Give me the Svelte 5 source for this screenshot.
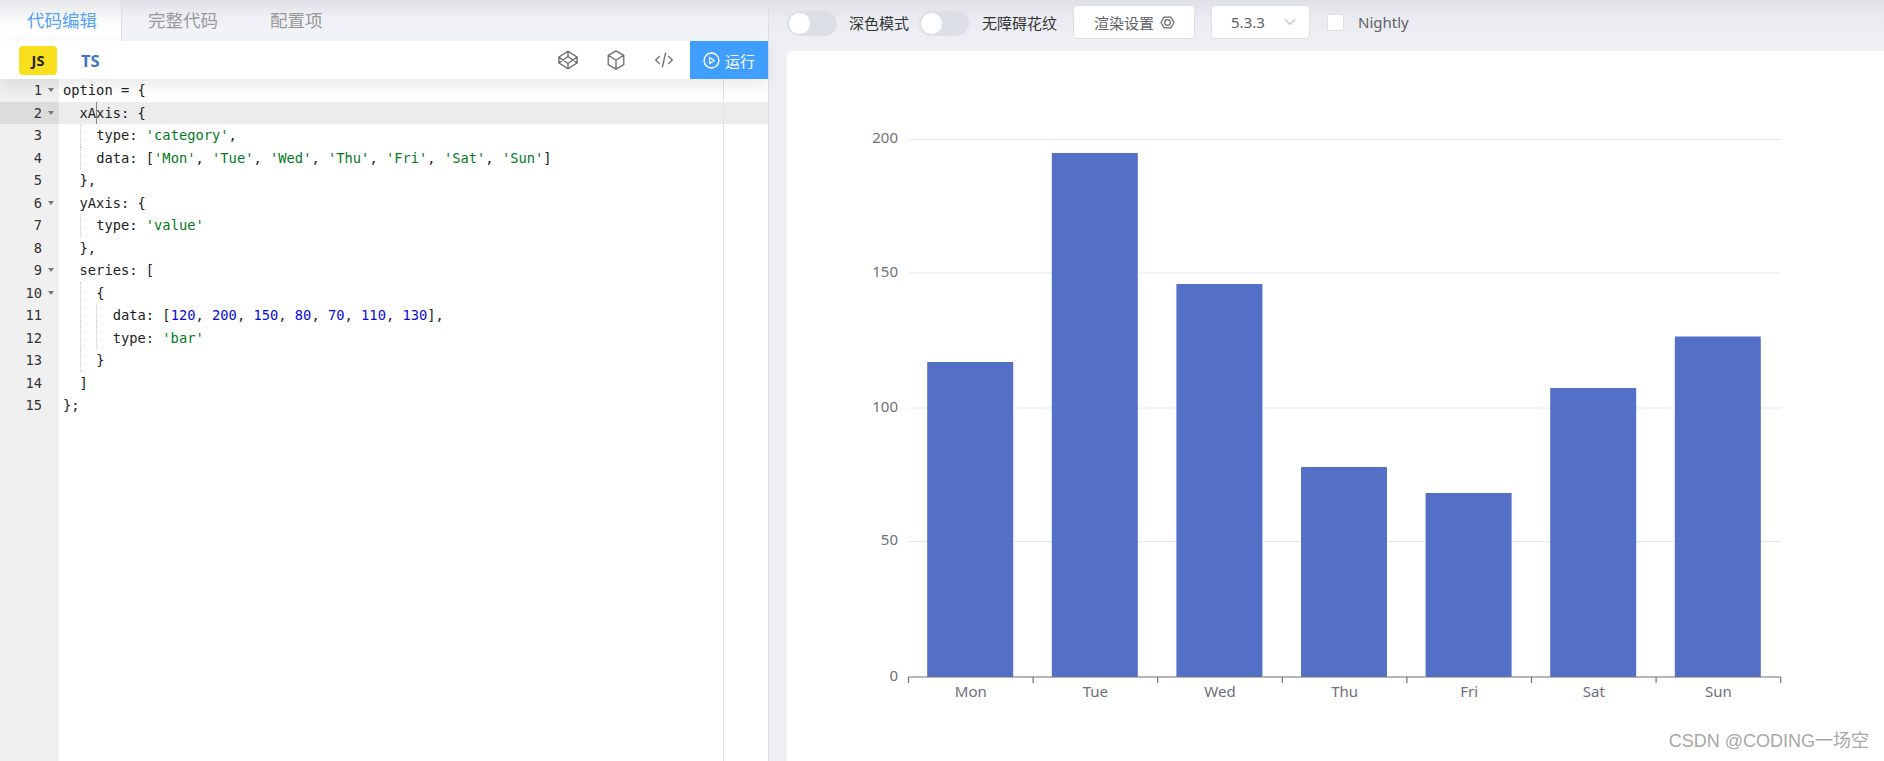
<script>
  const S = 's', N = 'n';
  const code = [
    { fold: true, indent: 0, parts: [['option = {']] },
    { fold: true, indent: 1, active: true, parts: [['xAxis: {']] },
    { indent: 2, guides: 1, parts: [['type: '], ["'category'", S], [',']] },
    { indent: 2, guides: 1, parts: [['data: ['], ["'Mon'", S], [', '], ["'Tue'", S], [', '], ["'Wed'", S], [', '], ["'Thu'", S], [', '], ["'Fri'", S], [', '], ["'Sat'", S], [', '], ["'Sun'", S], [']']] },
    { indent: 1, parts: [['},']] },
    { fold: true, indent: 1, parts: [['yAxis: {']] },
    { indent: 2, guides: 1, parts: [['type: '], ["'value'", S]] },
    { indent: 1, parts: [['},']] },
    { fold: true, indent: 1, parts: [['series: [']] },
    { fold: true, indent: 2, guides: 1, parts: [['{']] },
    { indent: 3, guides: 2, parts: [['data: ['], ['120', N], [', '], ['200', N], [', '], ['150', N], [', '], ['80', N], [', '], ['70', N], [', '], ['110', N], [', '], ['130', N], ['],']] },
    { indent: 3, guides: 2, parts: [['type: '], ["'bar'", S]] },
    { indent: 2, guides: 1, parts: [['}']] },
    { indent: 1, parts: [[']']] },
    { indent: 0, parts: [['};']] }
  ];

  const x0 = 908.5, step = 124.6, yBase = 677;
  const days = ['Mon', 'Tue', 'Wed', 'Thu', 'Fri', 'Sat', 'Sun'];
  const tops = [362, 153, 284, 467, 493, 388, 336.5];
  const ticks = [{ v: 0, y: 677 }, { v: 50, y: 541.5 }, { v: 100, y: 408 }, { v: 150, y: 273 }, { v: 200, y: 139.5 }];
</script>

<div class="page">
  <section class="left">
    <nav class="tabs">
      <span class="tab active">代码编辑</span>
      <span class="tab">完整代码</span>
      <span class="tab">配置项</span>
    </nav>
    <div class="toolbar">
      <span class="lang js">JS</span>
      <span class="lang ts">TS</span>
      <div class="tools">
        <svg class="tool" viewBox="0 0 24 24"><path d="M12 2.500 22 8.800v6.400L12 21.500 2 15.200V8.800ZM12 2.500v5.700M12 21.500v-5.700M2 8.800 12 15.800l10-7M2 15.200 12 8.200l10 7"/></svg>
        <svg class="tool" viewBox="0 0 24 24"><path d="M12 2 20.500 6.900v10.200L12 22 3.500 17.100V6.900ZM3.500 6.900 12 12l8.500-5.100M12 12v10"/></svg>
        <svg class="tool" viewBox="0 0 24 24"><path d="M7.500 7.500 3 12l4.500 4.500M16.500 7.500 21 12l-4.500 4.500M13.800 4 10.200 20"/></svg>
      </div>
      <button class="run">
        <svg viewBox="0 0 16 16"><circle cx="8" cy="8" r="7"/><path class="tri" d="M6.300 5.200 10.800 8l-4.500 2.800Z"/></svg>
        运行
      </button>
    </div>
    <div class="editor">
      <div class="margin-line"></div>
      {#each code as line, i}
        <div class="row" class:active={line.active}>
          <div class="gutter">
            <span class="num">{i + 1}</span>
            {#if line.fold}<span class="fold"></span>{/if}
          </div>
          <div class="code">{#each Array(line.guides ?? 0) as _, g}<i class="guide" style="left:{16.5 * (g + 1)}px"></i>{/each}{#if line.active}<i class="cursor"></i>{/if}<span>{' '.repeat(line.indent * 2)}</span>{#each line.parts as p}<span class={p[1] ?? ''}>{p[0]}</span>{/each}</div>
        </div>
      {/each}
    </div>
  </section>

  <section class="right">
    <header class="bar">
      <span class="switch"><i></i></span>
      <span class="label first">深色模式</span>
      <span class="switch"><i></i></span>
      <span class="label second">无障碍花纹</span>
      <button class="btn render">渲染设置
        <svg viewBox="0 0 16 16"><path d="M4.500 2.200h7L15 8l-3.500 5.800h-7L1 8Z"/><circle cx="8" cy="8" r="3"/></svg>
      </button>
      <button class="btn version">5.3.3
        <svg viewBox="0 0 12 8"><path d="M1 1.500 6 6.500l5-5"/></svg>
      </button>
      <span class="check"></span>
      <span class="nightly">Nightly</span>
    </header>
    <div class="card">
      <svg class="chart" viewBox="787 51 1097 710">
        {#each ticks as t}
          {#if t.v > 0}
            <line class="grid" x1={x0} x2={x0 + step * 7} y1={t.y} y2={t.y} />
          {/if}
          <text class="ylab" x="898" y={t.y + 3.5}>{t.v}</text>
        {/each}
        {#each tops as top, i}
          <rect class="bar-r" x={x0 + step * i + 18.7} y={top} width="86" height={yBase - top} />
        {/each}
        <line class="axis" x1={x0} x2={x0 + step * 7} y1={yBase} y2={yBase} />
        {#each Array(8) as _, i}
          <line class="axis" x1={x0 + step * i} x2={x0 + step * i} y1={yBase} y2={yBase + 6} />
        {/each}
        {#each days as d, i}
          <text class="xlab" x={x0 + step * i + step / 2} y="697">{d}</text>
        {/each}
      </svg>
      <span class="mark">CSDN @CODING一场空</span>
    </div>
  </section>
</div>

<style>
  :global(body) { margin: 0; background: #eff0f6; }
  .page {
    display: flex;
    width: 1884px;
    height: 761px;
    overflow: hidden;
    font-family: "Noto Sans", "Noto Sans CJK SC", sans-serif;
  }
  .left {
    width: 769px;
    flex: none;
    display: flex;
    flex-direction: column;
    border-right: 1px solid #dcdfe6;
    box-sizing: border-box;
    background: #fff;
  }
  .tabs {
    height: 41px;
    flex: none;
    display: flex;
    background: linear-gradient(#e0e1e6, #f0f1f6 45%, #f4f5f9);
  }
  .tab {
    font-size: 17.5px;
    line-height: 41px;
    color: #999;
    padding-right: 52px;
  }
  .tab.active {
    color: #56a3f5;
    width: 122px;
    box-sizing: border-box;
    padding: 0 0 0 27px;
    margin-right: 26px;
    background: linear-gradient(#e6e7ea, #fff 65%);
    border-right: 1px solid #dcdfe6;
  }
  .toolbar {
    height: 38px;
    flex: none;
    display: flex;
    align-items: center;
    background: #fff;
    position: relative;
    z-index: 2;
    box-shadow: 0 6px 16px rgba(0, 0, 0, .09);
  }
  .lang {
    font-family: "Open Sans", sans-serif;
    font-weight: 700;
  }
  .js {
    margin-left: 19px;
    width: 38px;
    height: 29px;
    line-height: 29px;
    text-align: center;
    background: #f7df1e;
    border-radius: 4px;
    font-size: 14.5px;
    color: #222;
  }
  .ts {
    margin-left: 24px;
    font-size: 16.5px;
    color: #3a76c4;
  }
  .tools {
    margin-left: auto;
    display: flex;
    gap: 26px;
    margin-right: 15px;
  }
  .tool {
    width: 22px;
    height: 22px;
    fill: none;
    stroke: #6f6f6f;
    stroke-width: 1.500;
    stroke-linejoin: round;
  }
  .run {
    width: 78px;
    height: 38px;
    border: 0;
    padding: 0;
    background: #409eff;
    color: #fff;
    font: 15px "Noto Sans CJK SC", sans-serif;
    display: flex;
    align-items: center;
    justify-content: center;
    gap: 5px;
  }
  .run svg {
    width: 17px;
    height: 17px;
    fill: none;
    stroke: #fff;
    stroke-width: 1.300;
  }
  .run .tri { stroke-width: 1.100; stroke-linejoin: round; }
  .editor {
    flex: 1;
    position: relative;
    background: linear-gradient(to right, #f0f0f0 59px, #fff 59px);
    font-family: "DejaVu Sans Mono", monospace;
    font-size: 13.75px;
    color: #222;
  }
  .margin-line {
    position: absolute;
    left: 723px;
    top: 0;
    bottom: 0;
    width: 1px;
    background: #e2e2e2;
    z-index: 1;
  }
  .row {
    display: flex;
    height: 22.5px;
    line-height: 22.5px;
  }
  .row.active { background: #ececec; }
  .gutter {
    width: 59px;
    flex: none;
    position: relative;
    text-align: right;
    box-sizing: border-box;
    padding-right: 17px;
    color: #333;
  }
  .row.active .gutter { background: #dcdcdc; }
  .fold {
    position: absolute;
    right: 5px;
    top: 9px;
    border: 3.500px solid transparent;
    border-top: 4px solid #777;
    border-bottom: 0;
  }
  .code {
    position: relative;
    padding-left: 4px;
    white-space: pre;
    flex: 1;
  }
  .code .guide {
    position: absolute;
    top: 0;
    bottom: 0;
    margin-left: 4px;
    border-left: 1px dotted #c8c8c8;
  }
  .cursor {
    position: absolute;
    left: 37px;
    top: 0;
    bottom: 0;
    width: 1px;
    background: #888;
  }
  .s { color: #007a1c; }
  .n { color: #0a0ad8; }
  .right {
    flex: 1;
    display: flex;
    flex-direction: column;
    min-width: 0;
    background: linear-gradient(#e0e1e6 0, #ebecf1 20px, #eff0f6 45px);
  }
  .bar {
    height: 51px;
    flex: none;
    box-sizing: border-box;
    display: flex;
    align-items: flex-start;
    padding-left: 18px;
  }
  .switch {
    margin-top: 11px;
    width: 50px;
    height: 25px;
    background: #dcdfe6;
    border-radius: 13px;
    flex: none;
    position: relative;
  }
  .switch i {
    position: absolute;
    left: 2px;
    top: 2px;
    width: 21px;
    height: 21px;
    background: #fff;
    border-radius: 50%;
  }
  .label {
    font-size: 15px;
    line-height: 25px;
    margin-top: 11px;
    color: #333;
  }
  .label.first { margin-left: 12px; margin-right: 10px; }
  .label.second { margin-left: 13px; margin-right: 16px; }
  .btn {
    height: 34px;
    margin-top: 5px;
    background: #fff;
    border: 1px solid #dcdfe6;
    border-radius: 4px;
    box-sizing: border-box;
    color: #606266;
    font: 15px "Noto Sans", "Noto Sans CJK SC", sans-serif;
    padding: 0;
    display: flex;
    align-items: center;
  }
  .render {
    width: 122px;
    padding-left: 20px;
    gap: 6px;
  }
  .render svg {
    width: 15px;
    height: 15px;
    fill: none;
    stroke: #666;
    stroke-width: 1.300;
    stroke-linejoin: round;
  }
  .version {
    width: 99px;
    margin-left: 16px;
    padding-left: 19px;
    gap: 19px;
  }
  .version svg {
    width: 12px;
    height: 8px;
    fill: none;
    stroke: #c0c4cc;
    stroke-width: 1.200;
  }
  .check {
    margin: 14px 0 0 17px;
    width: 17px;
    height: 17px;
    box-sizing: border-box;
    background: #fff;
    border: 1px solid #dcdfe6;
    border-radius: 2px;
  }
  .nightly {
    margin: 10px 0 0 14px;
    font-size: 15px;
    line-height: 25px;
    color: #606266;
  }
  .card {
    flex: 1;
    background: #fff;
    margin-left: 18px;
    border-radius: 6px 0 0 0;
    position: relative;
    min-height: 0;
  }
  .chart {
    display: block;
    width: 1097px;
    height: 710px;
  }
  .grid { stroke: #e0e6f1; stroke-width: 1; }
  .axis { stroke: #6e7079; stroke-width: 1.200; }
  .bar-r { fill: #5470c6; }
  .ylab, .xlab {
    font-family: "Noto Sans", sans-serif;
    font-size: 15px;
    fill: #6e7079;
  }
  .ylab { text-anchor: end; }
  .xlab { text-anchor: middle; }
  .mark {
    position: absolute;
    right: 15px;
    bottom: 9px;
    font: 18px "Liberation Sans", "Noto Sans CJK SC", sans-serif;
    color: #a8a8a8;
  }
</style>
